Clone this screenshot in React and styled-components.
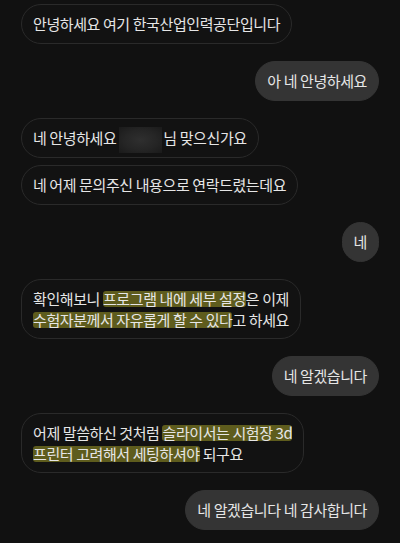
import React from 'react';
import styled, { createGlobalStyle } from 'styled-components';

const GlobalStyle = createGlobalStyle`
  html, body {
    margin: 0;
    padding: 0;
    background-color: #111111;
  }
  body {
    font-family: "Noto Sans CJK KR", "Noto Sans", sans-serif;
  }
`;

const Chat = styled.div`
  background-color: #111111;
  box-sizing: border-box;
  display: flex;
  flex-direction: column;
  height: 543px;
  overflow: hidden;
  padding: 4px 21px 0 21px;
  width: 400px;
`;

const Row = styled.div`
  display: flex;
  justify-content: ${p => (p.$mine ? 'flex-end' : 'flex-start')};
  margin-top: ${p => p.$gap}px;
`;

const Bubble = styled.div`
  background-color: ${p => (p.$mine ? '#343434' : '#121212')};
  border: 1px solid ${p => (p.$mine ? '#343434' : '#2a2a2a')};
  border-radius: 20px;
  box-sizing: border-box;
  color: #e6e6e6;
  font-size: 15px;
  letter-spacing: -0.4px;
  line-height: 21px;
  padding: 8px 11px ${p => (p.$tall ? 8 : 9)}px 11px;
  white-space: nowrap;
`;

const Mark = styled.span`
  background-color: #5e5c1d;
  border-radius: 3px;
  display: inline-block;
  line-height: 16px;
`;

const Hidden = styled.span`
  background: radial-gradient(ellipse at center, #2f2f2f 0%, #252525 55%, #1a1a1a 100%);
  display: inline-block;
  height: 26px;
  margin: -6px 1px -6px 0;
  vertical-align: middle;
  width: 43px;
`;

const messages = [
  { mine: false, body: <>안녕하세요 여기 한국산업인력공단입니다</> },
  { mine: true, body: <>아 네 안녕하세요</> },
  { mine: false, body: <>네 안녕하세요 <Hidden />님 맞으신가요</> },
  { mine: false, body: <>네 어제 문의주신 내용으로 연락드렸는데요</> },
  { mine: true, body: <>네</> },
  {
    mine: false,
    tall: true,
    body: (
      <>
        확인해보니 <Mark>프로그램 내에 세부 설정</Mark>은 이제
        <br />
        <Mark>수험자분께서 자유롭게 할 수 있다</Mark>고 하세요
      </>
    )
  },
  { mine: true, body: <>네 알겠습니다</> },
  {
    mine: false,
    tall: true,
    body: (
      <>
        어제 말씀하신 것처럼 <Mark>슬라이서는 시험장 3d</Mark>
        <br />
        <Mark>프린터 고려해서 세팅하셔야</Mark> 되구요
      </>
    )
  },
  { mine: true, body: <>네 알겠습니다 네 감사합니다</> }
];

export default function App() {
  return (
    <>
      <GlobalStyle />
      <Chat>
        {messages.map((m, i) => {
          let gap = 0;
          if (i > 0) gap = messages[i - 1].mine === m.mine ? 7 : 17;
          return (
            <Row key={i} $mine={m.mine} $gap={gap}>
              <Bubble $mine={m.mine} $tall={m.tall}>{m.body}</Bubble>
            </Row>
          );
        })}
      </Chat>
    </>
  );
}
